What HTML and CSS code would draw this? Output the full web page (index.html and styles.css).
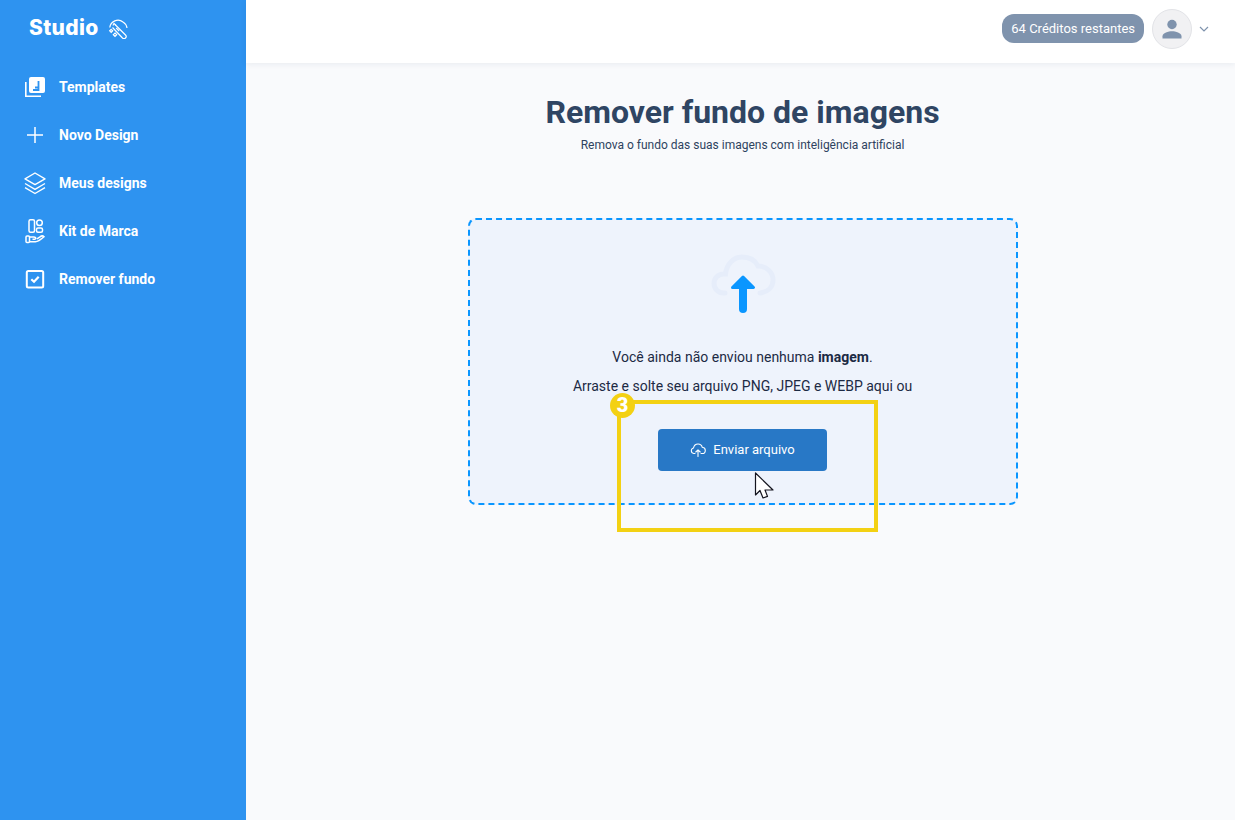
FILE: index.html
```html
<!DOCTYPE html>
<html lang="pt">
<head>
<meta charset="utf-8">
<title>Studio</title>
<link rel="stylesheet" href="styles.css">
</head>
<body>
<div class="app">
  <aside class="sidebar">
    <div class="brand">
      <span class="brand-name">Studio</span>
      <svg class="brand-icon" width="20" height="20" viewBox="0 0 20 20" fill="none" stroke="#fff" stroke-width="1.200"><path d="M1.800 8.500A8.200 8.200 0 0 1 15 3a8 8 0 0 1 4 6"/><path d="M6.300 4.800l-1.500 1.500M7 5.500l10.500 10.500a2 2 0 0 1-3 3L4.500 8.500"/><path d="M5.500 3.800 8 6.300M8.200 9l3 3"/><path d="M3.200 10.300l1.500 1.500-1.500 1.500-1.500-1.500zM7 14l1.700 1.700L7 17.400l-1.700-1.700z"/></svg>
    </div>
    <nav class="nav">
      <a class="nav-item"><span class="nav-icon"><svg width="22" height="22" viewBox="0 0 22 22" fill="none"><path d="M1.800 6v14.200H17" stroke="#fff" stroke-width="1.600"/><rect x="5" y="1" width="16" height="16" rx="2" fill="#fff"/><path d="M14.500 5v9H9M11 11.500h3.500" stroke="#2e93f0" stroke-width="1.800"/></svg></span>Templates</a>
      <a class="nav-item"><span class="nav-icon"><svg width="20" height="20" viewBox="0 0 20 20" fill="none" stroke="#fff" stroke-width="1.500"><path d="M10 2v16M2 10h16"/></svg></span>Novo Design</a>
      <a class="nav-item"><span class="nav-icon"><svg width="24" height="24" viewBox="0 0 24 24" fill="none" stroke="#fff" stroke-width="1.400" stroke-linejoin="round"><path d="M12 2 22 7.800 12 13.600 2 7.800z"/><path d="M2 12.500 12 18.300 22 12.500M2 16.700 12 22.500 22 16.700"/></svg></span>Meus designs</a>
      <a class="nav-item"><span class="nav-icon"><svg width="20" height="26" viewBox="0 0 20 26" fill="none" stroke="#fff" stroke-width="1.500"><rect x="4" y="1.800" width="5.500" height="12.500" rx="1.500"/><circle cx="14.500" cy="4.800" r="2.800"/><rect x="11.500" y="10" width="6" height="4.300" rx="1.500"/><rect x="1" y="18" width="3.500" height="6.500" rx="1"/><path d="M4.500 19h4.500c2 0 2.500 2 .5 2.300H7.500M4.500 23.800h6c2.500 0 4.500-1.500 8.500-5-1-1.200-2.500-1.200-4 0l-3 2"/></svg></span>Kit de Marca</a>
      <a class="nav-item"><span class="nav-icon"><svg width="20" height="20" viewBox="0 0 20 20" fill="none"><rect x="1.800" y="2" width="16.400" height="16.400" rx="1.500" stroke="#fff" stroke-width="2"/><path d="M6.300 10.300 9 12.800l4.700-5" stroke="#fff" stroke-width="2.200"/></svg></span>Remover fundo</a>
    </nav>
  </aside>
  <div class="main">
    <header class="topbar">
      <span class="credits">64 Créditos restantes</span>
      <span class="avatar"><svg width="24" height="24" viewBox="0 0 24 24" fill="#7f93ad"><circle cx="12" cy="7.500" r="4.700"/><path d="M2.500 21.500v-2.200c0-3.500 6-5 9.500-5s9.500 1.500 9.500 5v2.200z"/></svg></span>
      <svg class="chevron" width="10" height="6" viewBox="0 0 10 6" fill="none" stroke="#7f93ad" stroke-width="1.200"><path d="M1 1l4 4 4-4"/></svg>
    </header>
    <main class="content">
      <h1 class="title">Remover fundo de imagens</h1>
      <p class="subtitle">Remova o fundo das suas imagens com inteligência artificial</p>
      <section class="dropzone">
        <svg class="cloud" width="66" height="62" viewBox="0 0 66 62" fill="none" stroke-linecap="round"><path d="M15 40H13.500A9.500 9.500 0 0 1 13.500 21H15.500C16.500 11 24 4 32 4C39 4 45 7 48 13C56 13 63 19 63 27C63 34 58 39 50 40" stroke="#e6edfa" stroke-width="5"/><path d="M33 56V30" stroke="#0a96ff" stroke-width="8"/><path d="M33 24 43.500 34.500H22.500z" fill="#0a96ff" stroke="#0a96ff" stroke-width="3" stroke-linejoin="round"/></svg>
        <p class="line-one">Você ainda não enviou nenhuma <strong>imagem</strong>.</p>
        <p class="line-two">Arraste e solte seu arquivo PNG, JPEG e WEBP aqui ou</p>
        <button class="upload"><svg class="upload-icon" width="16" height="14" viewBox="0 0 16 14" fill="none" stroke="#fff" stroke-width="1.100" stroke-linecap="round" stroke-linejoin="round"><path d="M5 10.500H3.700A2.800 2.800 0 0 1 3.500 5C4 2.500 6 1 8 1c2.200 0 3.800 1.400 4.300 3.300 1.700.2 3 1.400 3 3.100 0 1.800-1.300 3.100-3.100 3.100H11"/><path d="M8 13.500V7M5.800 9 8 6.800 10.200 9"/></svg>Enviar arquivo</button>
      </section>
    </main>
  </div>
</div>
<div class="callout"><span class="callout-badge">3</span></div>
<svg class="cursor" width="20" height="28" viewBox="0 0 20 28"><path d="M1.500 1v22l4.500-4.500 3 7.500 4.500-1.600-2.500-6.400H19z" fill="#fff" stroke="#15151f" stroke-width="1.200" stroke-linejoin="round"/></svg>
</body>
</html>
```

FILE: styles.css
```css
* { box-sizing: border-box; }
html, body { margin: 0; height: 100%; overflow: hidden; }
body { font-family: Roboto, "Liberation Sans", sans-serif; background: #f9fafc; }
.app { display: flex; height: 820px; }
.sidebar { width: 246px; flex: none; background: #2e93f0; color: #fff; }
.brand { display: flex; align-items: center; height: 55px; padding-left: 29px; gap: 9px; }
.brand-name { font-family: Inter, Lato, sans-serif; font-weight: 800; font-size: 21px; letter-spacing: .35px; line-height: 55px; }
.brand-icon { margin-top: 2px; flex: none; }
.nav { display: flex; flex-direction: column; padding-top: 8px; }
.nav-item { display: flex; align-items: center; height: 48px; padding-left: 24px; font-size: 14px; font-weight: 700; color: #fff; }
.nav-icon { display: flex; align-items: center; justify-content: center; width: 22px; height: 26px; margin-right: 13px; flex: none; }
.nav-icon svg { flex: none; }
.main { flex: 1; display: flex; flex-direction: column; min-width: 0; }
.topbar { height: 63px; flex: none; background: #fff; box-shadow: 0 1px 6px rgba(30, 50, 90, .08); display: flex; align-items: center; justify-content: flex-end; padding: 0 26px 5px 0; position: relative; }
.credits { background: #7f93ad; color: #fff; font-size: 13px; font-weight: 400; height: 29px; line-height: 29px; padding: 0 9px; margin-bottom: 1px; border-radius: 12px; white-space: nowrap; }
.avatar { width: 40px; height: 40px; margin: 0 7px 0 8px; border-radius: 50%; background: #f1f1f3; border: 1px solid #e2e3e7; display: flex; align-items: center; justify-content: center; }
.content { flex: 1; display: flex; flex-direction: column; align-items: center; padding: 29px 0 0 4px; }
.title { margin: 0; font-size: 32px; line-height: 40px; font-weight: 700; color: #2f4563; }
.subtitle { margin: 5px 0 0; font-size: 12px; line-height: 16px; color: #2e4360; }
.dropzone { width: 550px; height: 287px; margin-top: 65px; background: #eef3fc; border: 2px dashed #0a96ff; border-radius: 8px; display: flex; flex-direction: column; align-items: center; padding-top: 33px; color: #1c2a44; font-size: 14px; }
.cloud { flex: none; }
.line-one { margin: 32px 0 0; line-height: 20px; }
.line-two { margin: 9px 0 0; line-height: 20px; }
.line-one strong { font-weight: 700; }
.upload { margin-top: 33px; width: 169px; height: 42px; border: 0; border-radius: 4px; padding: 0 0 2px; background: #2878c6; color: #fff; font: 400 13px Roboto, sans-serif; display: flex; align-items: center; justify-content: center; gap: 7px; }
.upload-icon { margin-top: 2px; }
.callout { position: absolute; left: 617px; top: 400px; width: 261px; height: 132px; border: 4px solid #f3d113; }
.callout-badge { position: absolute; left: -11px; top: -11px; width: 25px; height: 25px; border-radius: 50%; background: #f3d113; color: #fff; font-size: 20px; font-weight: 900; line-height: 25px; text-align: center; }
.cursor { position: absolute; left: 754px; top: 472px; }
```
